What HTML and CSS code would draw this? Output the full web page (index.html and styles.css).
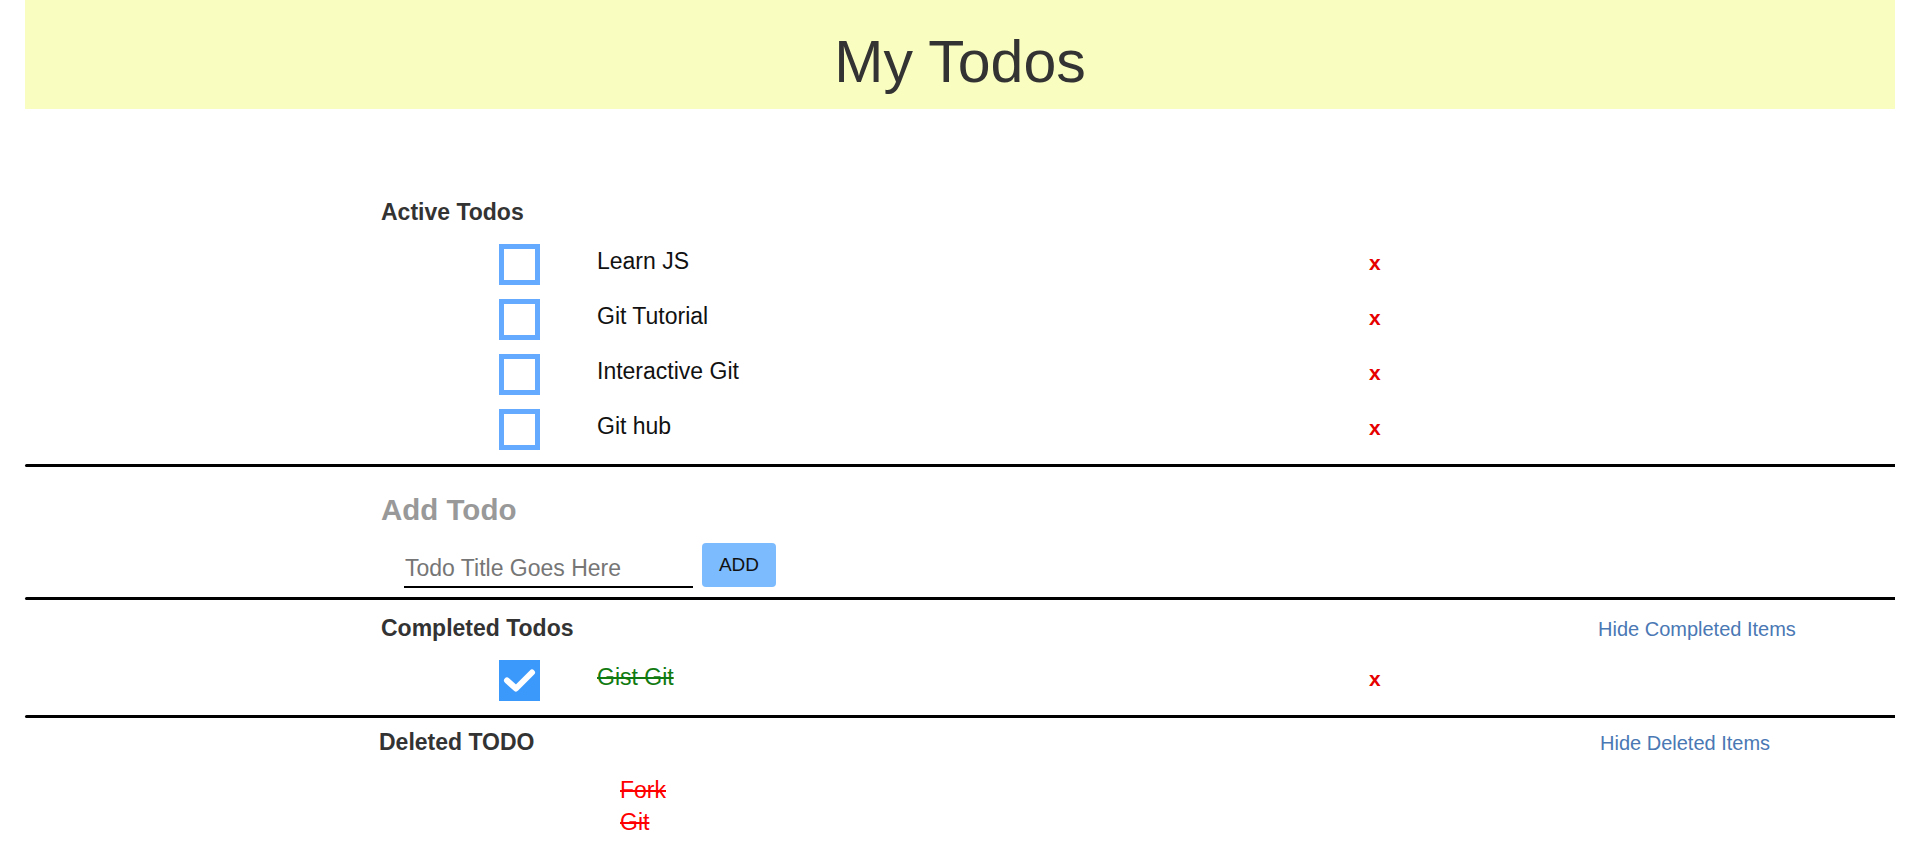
FILE: index.html
```html
<!DOCTYPE html>
<html lang="en">
<head>
<meta charset="utf-8">
<title>My Todos</title>
<link rel="stylesheet" href="styles.css">
</head>
<body>
<div class="page">
  <header class="banner"><h1>My Todos</h1></header>
  <main>
    <section class="section section-active">
      <div class="section-head"><h2 class="heading">Active Todos</h2></div>
      <ul class="todo-list">
        <li class="todo"><span class="box"></span><span class="title">Learn JS</span><span class="remove">x</span></li>
        <li class="todo"><span class="box"></span><span class="title">Git Tutorial</span><span class="remove">x</span></li>
        <li class="todo"><span class="box"></span><span class="title">Interactive Git</span><span class="remove">x</span></li>
        <li class="todo"><span class="box"></span><span class="title">Git hub</span><span class="remove">x</span></li>
      </ul>
    </section>
    <hr class="rule">
    <section class="section section-add">
      <h2 class="add-title">Add Todo</h2>
      <form class="add-form">
        <input class="add-input" type="text" placeholder="Todo Title Goes Here">
        <button class="add-button" type="button">ADD</button>
      </form>
    </section>
    <hr class="rule rule-after-add">
    <section class="section section-completed">
      <div class="section-head">
        <h2 class="heading">Completed Todos</h2>
        <a class="toggle" href="#">Hide Completed Items</a>
      </div>
      <ul class="todo-list">
        <li class="todo"><span class="box box-checked"><svg width="41" height="41" viewBox="0 0 41 41"><polyline points="8,20.5 17,28.5 33,12.5" fill="none" stroke="#fff" stroke-width="6" stroke-linecap="round" stroke-linejoin="round"/></svg></span><span class="title title-done">Gist Git</span><span class="remove">x</span></li>
      </ul>
    </section>
    <hr class="rule">
    <section class="section section-deleted">
      <div class="section-head">
        <h2 class="heading heading-deleted">Deleted TODO</h2>
        <a class="toggle" href="#">Hide Deleted Items</a>
      </div>
      <ul class="deleted-list">
        <li class="deleted-item">Fork</li>
        <li class="deleted-item">Git</li>
      </ul>
    </section>
  </main>
</div>
</body>
</html>
```

FILE: styles.css
```css
* { box-sizing: border-box; }

html, body {
  margin: 0;
  padding: 0;
  background: #fff;
}

body {
  font-family: "Liberation Sans", Arial, sans-serif;
  color: #111;
}

.page {
  padding: 0 25px;
}

.banner {
  height: 109px;
  padding-top: 33px;
  background: #fafdc0;
  text-align: center;
}

.banner h1 {
  margin: 0;
  font-size: 59px;
  line-height: 59px;
  font-weight: normal;
  color: #333;
}

.section {
  padding-left: 356px;
}

.section-active { padding-top: 90px; }
.section-add { padding-top: 26px; }
.section-completed { padding-top: 15px; }
.section-deleted { padding-top: 11px; }

.section-head {
  display: flex;
  align-items: baseline;
}

.heading {
  margin: 0;
  flex: 0 0 1217px;
  font-size: 23px;
  line-height: 26px;
  font-weight: bold;
  color: #333;
}

.heading-deleted {
  margin-left: -2px;
  flex-basis: 1221px;
}

.toggle {
  font-size: 20px;
  line-height: 24px;
  color: #4a78b4;
  text-decoration: none;
}

.todo-list {
  list-style: none;
  margin: 12px 0 0;
  padding: 0 0 0 118px;
}

.todo {
  display: flex;
  align-items: center;
  height: 55px;
}

.box {
  flex: 0 0 41px;
  width: 41px;
  height: 41px;
  border: 5px solid #64abff;
  background: #fff;
  margin-right: 57px;
}

.box-checked {
  border: 0;
  background: #3b99fc;
}

.box-checked svg {
  display: block;
}

.title {
  flex: 0 0 772px;
  font-size: 23px;
  line-height: 26px;
  margin-bottom: 8px;
  color: #111;
}

.title-done {
  color: #117a11;
  text-decoration: line-through;
}

.remove {
  font-size: 21px;
  line-height: 26px;
  font-weight: bold;
  margin-bottom: 4px;
  color: #e60000;
}

.rule {
  border: 0;
  height: 3px;
  margin: 7px 0 0;
  background: #000;
  border-radius: 2px 0 0 2px;
}

.rule-after-add { margin-top: 9px; }

.add-title {
  margin: 0;
  font-size: 29.5px;
  line-height: 34px;
  font-weight: bold;
  color: #999;
}

.add-form {
  display: flex;
  align-items: flex-end;
  margin: 16px 0 0;
}

.add-input {
  margin: 0 0 0 23px;
  width: 289px;
  height: 36px;
  padding: 3px 0 5px 1px;
  border: 0;
  border-bottom: 2px solid #000;
  font-family: "Liberation Sans", Arial, sans-serif;
  font-size: 23px;
  line-height: 26px;
  color: #111;
  background: transparent;
  outline: none;
}

.add-input::placeholder {
  color: #767676;
}

.add-button {
  margin: 0 0 1px 9px;
  width: 74px;
  height: 44px;
  border: 0;
  border-radius: 4px;
  background: #7dbbff;
  font-family: "Liberation Sans", Arial, sans-serif;
  font-size: 19px;
  color: #111;
  padding: 0;
}

.deleted-list {
  list-style: none;
  margin: 19px 0 0;
  padding: 0 0 0 239px;
}

.deleted-item {
  font-size: 23px;
  line-height: 32px;
  color: #f00;
  text-decoration: line-through;
}
```
